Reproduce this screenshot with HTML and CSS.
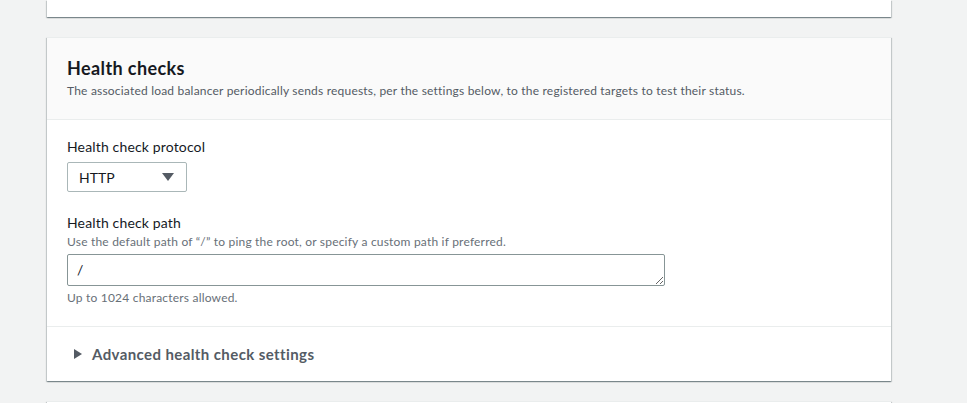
FILE: index.html
```html
<!DOCTYPE html>
<html lang="en">
    <head>
        <meta charset="UTF-8" />
        <meta name="viewport" content="width=device-width, initial-scale=1.0" />
        <title>Target group - Health checks</title>
        <link rel="stylesheet" href="styles.css">
    </head>

    <body>
        <div class="page">
            <!-- end of the previous section, scrolled mostly out of view -->
            <div class="card card-prev"></div>

            <div class="card">
                <div class="card-header">
                    <h2 class="card-title">Health checks</h2>
                    <p class="card-desc">
                        The associated load balancer periodically sends requests, per the settings below, to the registered targets to test their status.
                    </p>
                </div>

                <div class="card-body">
                    <div class="field">
                        <label class="field-label">Health check protocol</label>
                        <div class="select">
                            <span>HTTP</span>
                            <span class="select-caret"></span>
                        </div>
                    </div>

                    <div class="field">
                        <label class="field-label">Health check path</label>
                        <div class="field-hint">Use the default path of “/” to ping the root, or specify a custom path if preferred.</div>
                        <textarea class="path-input" rows="1">/</textarea>
                        <div class="field-hint field-constraint">Up to 1024 characters allowed.</div>
                    </div>
                </div>

                <div class="expander">
                    <span class="expander-caret"></span>
                    <span>Advanced health check settings</span>
                </div>
            </div>

            <!-- top of the next section -->
            <div class="card card-next"></div>
        </div>
    </body>
</html>
```

FILE: styles.css
```css
body {
    margin: 0;
    padding: 0;
    background-color: #f2f3f3;
    font-family: Lato, "Open Sans", sans-serif;
    color: #16191f;
}

.page {
    display: flex;
    flex-direction: column;
    gap: 20px;
    width: 844px;
    padding-left: 47px;
}

.card {
    background-color: #ffffff;
    box-shadow: 0 1px 1px 0 rgba(0, 28, 36, 0.3), 1px 1px 1px 0 rgba(0, 28, 36, 0.15), -1px 1px 1px 0 rgba(0, 28, 36, 0.15);
    border-top: 1px solid #eaeded;
}

.card-prev {
    height: 17px;
    border-top: none;
}

.card-next {
    height: 30px;
}

.card-header {
    background-color: #fafafa;
    border-bottom: 1px solid #eaeded;
    padding: 19px 20px 20px;
}

.card-title {
    margin: 0;
    font-size: 18px;
    line-height: 22px;
    font-weight: 700;
    letter-spacing: 0.4px;
}

.card-desc {
    margin: 4px 0 0;
    font-size: 12px;
    line-height: 16px;
    letter-spacing: 0.2px;
    color: #545b64;
}

.card-body {
    display: flex;
    flex-direction: column;
    gap: 20px;
    padding: 16px 20px 20px;
    border-bottom: 1px solid #eaeded;
}

.field {
    display: flex;
    flex-direction: column;
    align-items: flex-start;
}

.field-label {
    font-size: 14px;
    line-height: 22px;
    letter-spacing: 0.15px;
}

.field-hint {
    font-size: 12px;
    line-height: 16px;
    letter-spacing: 0.2px;
    color: #687078;
}

.field-constraint {
    margin-top: 4px;
}

.select {
    margin-top: 4px;
    box-sizing: border-box;
    width: 120px;
    height: 30px;
    padding: 0 12px 0 11px;
    border: 1px solid #aab7b8;
    border-radius: 2px;
    background-color: #ffffff;
    display: flex;
    align-items: center;
    justify-content: space-between;
    font-size: 14px;
}

.select-caret {
    width: 0;
    height: 0;
    border-left: 6px solid transparent;
    border-right: 6px solid transparent;
    border-top: 8px solid #545b64;
}

.path-input {
    margin-top: 4px;
    box-sizing: border-box;
    width: 598px;
    height: 32px;
    padding: 4px 9px;
    border: 1px solid #879596;
    border-radius: 2px;
    font-family: inherit;
    font-size: 14px;
    line-height: 22px;
    color: #16191f;
    resize: both;
    overflow: hidden;
}

.expander {
    display: flex;
    align-items: center;
    gap: 10px;
    padding: 16px 27px;
    font-size: 15px;
    line-height: 22px;
    font-weight: 700;
    letter-spacing: 0.4px;
    color: #545b64;
}

.expander-caret {
    width: 0;
    height: 0;
    border-top: 5px solid transparent;
    border-bottom: 5px solid transparent;
    border-left: 8px solid #545b64;
}
```
